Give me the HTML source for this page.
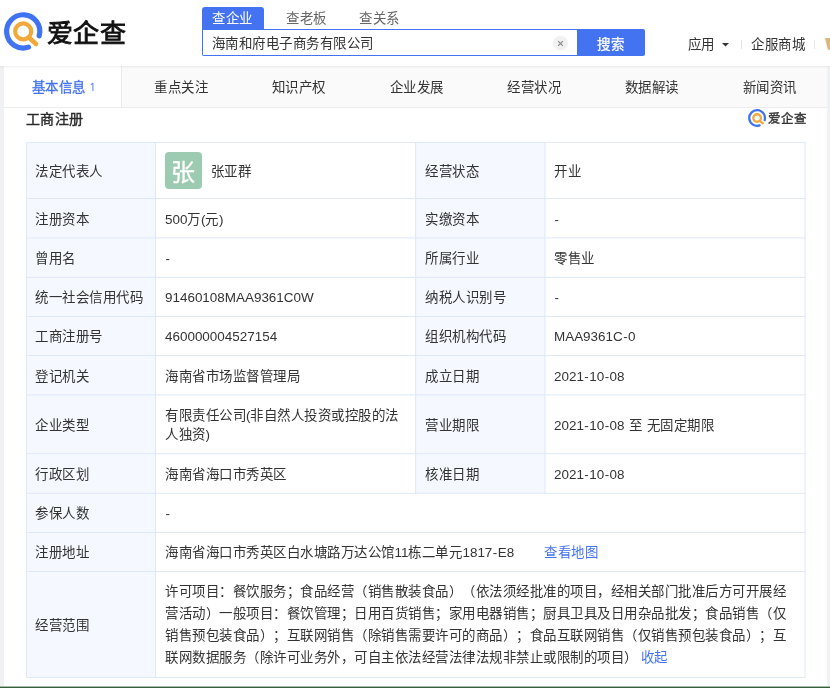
<!DOCTYPE html>
<html lang="zh-CN">
<head>
<meta charset="utf-8">
<style>
*{margin:0;padding:0;box-sizing:border-box;}
html,body{width:830px;height:688px;overflow:hidden;background:#f0f1f3;}
body{position:relative;font-family:"Liberation Sans",sans-serif;color:#333;font-size:13.4px;text-spacing-trim:space-all;}
.abs{position:absolute;white-space:nowrap;}
#header{position:absolute;left:0;top:0;width:830px;height:66px;background:#fff;box-shadow:0 1px 2px rgba(0,0,0,0.07);z-index:5;}
#main{position:absolute;left:4px;top:66px;width:823px;height:620px;background:#fff;}
#bottomline{position:absolute;left:0;top:686px;width:830px;height:2px;}
.tabbar{position:absolute;left:4px;top:66px;width:823px;height:42px;background:#fafafa;border-bottom:1px solid #ececec;}
.tab{position:absolute;top:0;height:41px;}
.tab.active{background:#fff;color:#4373f0;border-right:1px solid #ececec;}
.grid{position:absolute;left:26px;top:142px;width:779px;height:536px;border:1px solid #e3ebf7;}
.hl{position:absolute;height:1px;background:#e3ebf7;}
.vl{position:absolute;width:1px;background:#e3ebf7;}
.lab{position:absolute;background:#f5f8fe;}
.t{position:absolute;white-space:nowrap;font-size:13.45px;color:#333;line-height:19px;letter-spacing:0.5px;}
.l{letter-spacing:0;}
.hy{padding:0 0.45px;}
.sp{padding:0 0.25px;}
.h{position:absolute;white-space:nowrap;font-size:13.45px;line-height:19px;letter-spacing:0.5px;}
.tt{position:absolute;white-space:nowrap;font-size:13.45px;line-height:19px;letter-spacing:0.5px;top:77.5px;color:#333;}
</style>
</head>
<body><div id="wrap" style="position:absolute;left:0;top:0;width:830px;height:688px;will-change:transform;">
<div id="header">
  <svg class="abs" style="left:0;top:0" width="46" height="60" viewBox="0 0 46 60">
    <path d="M 39.2 35.8 A 16.6 16.6 0 1 0 28.5 47.1" fill="none" stroke="#3f73f1" stroke-width="5.2" stroke-linecap="round"/>
    <circle cx="23.2" cy="31.4" r="8" fill="none" stroke="#f0a93a" stroke-width="4.2"/>
    <path d="M 29 37.5 L 36 44" stroke="#f0a93a" stroke-width="4.6" stroke-linecap="round"/>
  </svg>
  <div class="abs" style="left:47px;top:15.5px;font-size:26px;line-height:36px;color:#111;letter-spacing:0.3px;-webkit-text-stroke:0.9px #111;transform:scaleY(0.955);transform-origin:0 0;">爱企查</div>

  <div class="abs" style="left:202px;top:7px;width:62px;height:23px;background:#4373f0;border-radius:3px 3px 0 0;"></div>
  <div class="h" style="left:212px;top:9.4px;color:#fff;">查企业</div>
  <div class="h" style="left:286px;top:9.4px;color:#666;">查老板</div>
  <div class="h" style="left:359.3px;top:9.4px;color:#666;">查关系</div>

  <div class="abs" style="left:202px;top:29px;width:377px;height:27px;border:1px solid #4373f0;border-right:none;border-radius:0 0 0 2px;background:#fff;"></div>
  <div class="h" style="left:211.5px;top:34px;color:#333;letter-spacing:0.5px;">海南和府电子商务有限公司</div>
  <div class="abs" style="left:553px;top:35.5px;width:14.5px;height:14.5px;border-radius:50%;background:#f1f1f1;"></div>
  <svg class="abs" style="left:553px;top:35.5px" width="15" height="15" viewBox="0 0 15 15"><path d="M5.1 5.1 L9.9 9.9 M9.9 5.1 L5.1 9.9" stroke="#8a8a8a" stroke-width="1.15"/></svg>
  <div class="abs" style="left:577px;top:29px;width:68px;height:27px;background:#4373f0;border-radius:0 2px 2px 0;"></div>
  <div class="h" style="left:597px;top:34.5px;color:#fff;-webkit-text-stroke:0.3px #fff;">搜索</div>

  <div class="h" style="left:687.8px;top:34.5px;color:#333;">应用</div>
  <svg class="abs" style="left:722px;top:42.5px" width="7" height="4" viewBox="0 0 7 4"><path d="M0 0 L7 0 L3.5 3.5 Z" fill="#333"/></svg>
  <div class="abs" style="left:741px;top:40px;width:1px;height:9px;background:#e4e4e4;"></div>
  <div class="h" style="left:751px;top:34.5px;color:#333;">企服商城</div>
  <div class="abs" style="left:814px;top:40px;width:1px;height:9px;background:#e8e8e8;"></div>
  <svg class="abs" style="left:824.8px;top:37.9px" width="6" height="12" viewBox="0 0 6 12"><path d="M0 0 L6 0 L6 11.7 L2.8 11.7 Z" fill="#dcb67c"/></svg>
</div>

<div id="main"></div>
<div class="tabbar">
  <div class="tab active" style="left:0;width:118px;"></div>
</div>
<div class="tt" style="left:31.7px;top:77.5px;color:#4373f0;-webkit-text-stroke:0.3px #4373f0;">基本信息</div>
<svg class="abs" style="left:85px;top:78px" width="15" height="17" viewBox="85 78 15 17"><path d="M90.9 84.8 L92.9 83.3 L92.9 91" stroke="#6d90f3" stroke-width="1.15" fill="none" stroke-linejoin="round"/></svg>
<div class="tt" style="left:154px;">重点关注</div>
<div class="tt" style="left:271.7px;">知识产权</div>
<div class="tt" style="left:389.5px;">企业发展</div>
<div class="tt" style="left:507.2px;">经营状况</div>
<div class="tt" style="left:624.9px;">数据解读</div>
<div class="tt" style="left:742.6px;">新闻资讯</div>

<div class="abs" style="left:25.5px;top:109px;font-size:14px;line-height:20px;letter-spacing:0.6px;-webkit-text-stroke:0.4px #2a2a2a;color:#2a2a2a;">工商注册</div>
<svg class="abs" style="left:747px;top:107.5px" width="20" height="20" viewBox="0 0 20 20">
  <path d="M 17.67 12.08 A 7.85 7.85 0 1 0 12.6 17.43" fill="none" stroke="#3f73f1" stroke-width="2.3" stroke-linecap="round"/>
  <circle cx="10.1" cy="10" r="3.75" fill="none" stroke="#f0a93a" stroke-width="2.3"/>
  <path d="M 12.9 12.8 L 15.8 15.4" stroke="#f0a93a" stroke-width="2.2" stroke-linecap="round"/>
</svg>
<div class="abs" style="left:768px;top:110px;font-size:12.5px;line-height:18px;letter-spacing:0.2px;-webkit-text-stroke:0.35px #333;color:#333;">爱企查</div>

<!--TABLE-->
<svg class="abs" style="left:0;top:0" width="830" height="688" viewBox="0 0 830 688">
<rect x="26.5" y="142.4" width="129.0" height="56.099999999999994" fill="#f5f8fe"/>
<rect x="415.6" y="142.4" width="129.39999999999998" height="56.099999999999994" fill="#f5f8fe"/>
<rect x="26.5" y="198.5" width="129.0" height="39.400000000000006" fill="#f5f8fe"/>
<rect x="415.6" y="198.5" width="129.39999999999998" height="39.400000000000006" fill="#f5f8fe"/>
<rect x="26.5" y="237.9" width="129.0" height="39.49999999999997" fill="#f5f8fe"/>
<rect x="415.6" y="237.9" width="129.39999999999998" height="39.49999999999997" fill="#f5f8fe"/>
<rect x="26.5" y="277.4" width="129.0" height="39.10000000000002" fill="#f5f8fe"/>
<rect x="415.6" y="277.4" width="129.39999999999998" height="39.10000000000002" fill="#f5f8fe"/>
<rect x="26.5" y="316.5" width="129.0" height="39.0" fill="#f5f8fe"/>
<rect x="415.6" y="316.5" width="129.39999999999998" height="39.0" fill="#f5f8fe"/>
<rect x="26.5" y="355.5" width="129.0" height="39.39999999999998" fill="#f5f8fe"/>
<rect x="415.6" y="355.5" width="129.39999999999998" height="39.39999999999998" fill="#f5f8fe"/>
<rect x="26.5" y="394.9" width="129.0" height="58.80000000000001" fill="#f5f8fe"/>
<rect x="415.6" y="394.9" width="129.39999999999998" height="58.80000000000001" fill="#f5f8fe"/>
<rect x="26.5" y="453.7" width="129.0" height="39.60000000000002" fill="#f5f8fe"/>
<rect x="415.6" y="453.7" width="129.39999999999998" height="39.60000000000002" fill="#f5f8fe"/>
<rect x="26.5" y="493.3" width="129.0" height="39.19999999999999" fill="#f5f8fe"/>
<rect x="26.5" y="532.5" width="129.0" height="39.0" fill="#f5f8fe"/>
<rect x="26.5" y="571.5" width="129.0" height="106.0" fill="#f5f8fe"/>
<line x1="26.0" y1="142.4" x2="805.5" y2="142.4" stroke="#dfe8f9" stroke-width="1"/>
<line x1="26.0" y1="198.5" x2="805.5" y2="198.5" stroke="#dfe8f9" stroke-width="1"/>
<line x1="26.0" y1="237.9" x2="805.5" y2="237.9" stroke="#dfe8f9" stroke-width="1"/>
<line x1="26.0" y1="277.4" x2="805.5" y2="277.4" stroke="#dfe8f9" stroke-width="1"/>
<line x1="26.0" y1="316.5" x2="805.5" y2="316.5" stroke="#dfe8f9" stroke-width="1"/>
<line x1="26.0" y1="355.5" x2="805.5" y2="355.5" stroke="#dfe8f9" stroke-width="1"/>
<line x1="26.0" y1="394.9" x2="805.5" y2="394.9" stroke="#dfe8f9" stroke-width="1"/>
<line x1="26.0" y1="453.7" x2="805.5" y2="453.7" stroke="#dfe8f9" stroke-width="1"/>
<line x1="26.0" y1="493.3" x2="805.5" y2="493.3" stroke="#dfe8f9" stroke-width="1"/>
<line x1="26.0" y1="532.5" x2="805.5" y2="532.5" stroke="#dfe8f9" stroke-width="1"/>
<line x1="26.0" y1="571.5" x2="805.5" y2="571.5" stroke="#dfe8f9" stroke-width="1"/>
<line x1="26.0" y1="677.5" x2="805.5" y2="677.5" stroke="#dfe8f9" stroke-width="1"/>
<line x1="26.5" y1="142.4" x2="26.5" y2="677.5" stroke="#dfe8f9" stroke-width="1"/>
<line x1="155.5" y1="142.4" x2="155.5" y2="677.5" stroke="#dfe8f9" stroke-width="1"/>
<line x1="415.6" y1="142.4" x2="415.6" y2="493.3" stroke="#dfe8f9" stroke-width="1"/>
<line x1="545.0" y1="142.4" x2="545.0" y2="493.3" stroke="#dfe8f9" stroke-width="1"/>
<line x1="805.0" y1="142.4" x2="805.0" y2="677.5" stroke="#dfe8f9" stroke-width="1"/>
</svg>
<div id="cells">
<div class="t" style="left:35.3px;top:161.75px;">法定代表人</div>
<div class="t" style="left:425px;top:161.75px;">经营状态</div>
<div class="t" style="left:554px;top:161.75px;">开业</div>
<div class="t" style="left:35.3px;top:209.5px;">注册资本</div>
<div class="t" style="left:165.0px;top:209.5px;"><span class="l">500</span>万<span class="l">(</span>元<span class="l">)</span></div>
<div class="t" style="left:425px;top:209.5px;">实缴资本</div>
<div class="t" style="left:554px;top:209.5px;"><span class="l"><span class="hy">-</span></span></div>
<div class="t" style="left:35.3px;top:248.95px;">曾用名</div>
<div class="t" style="left:165.0px;top:248.95px;"><span class="l"><span class="hy">-</span></span></div>
<div class="t" style="left:425px;top:248.95px;">所属行业</div>
<div class="t" style="left:554px;top:248.95px;">零售业</div>
<div class="t" style="left:35.3px;top:288.25px;">统一社会信用代码</div>
<div class="t" style="left:165.0px;top:288.25px;"><span class="l">91460108MAA9361C0W</span></div>
<div class="t" style="left:425px;top:288.25px;">纳税人识别号</div>
<div class="t" style="left:554px;top:288.25px;"><span class="l"><span class="hy">-</span></span></div>
<div class="t" style="left:35.3px;top:327.3px;">工商注册号</div>
<div class="t" style="left:165.0px;top:327.3px;"><span class="l">460000004527154</span></div>
<div class="t" style="left:425px;top:327.3px;">组织机构代码</div>
<div class="t" style="left:554px;top:327.3px;"><span class="l">MAA9361C<span class="hy">-</span>0</span></div>
<div class="t" style="left:35.3px;top:366.5px;">登记机关</div>
<div class="t" style="left:165.0px;top:366.5px;">海南省市场监督管理局</div>
<div class="t" style="left:425px;top:366.5px;">成立日期</div>
<div class="t" style="left:554px;top:366.5px;"><span class="l">2021<span class="hy">-</span>10<span class="hy">-</span>08</span></div>
<div class="t" style="left:35.3px;top:415.6px;">企业类型</div>
<div class="t" style="left:425px;top:415.6px;">营业期限</div>
<div class="t" style="left:554px;top:415.6px;"><span class="l">2021<span class="hy">-</span>10<span class="hy">-</span>08<span class="sp"> </span></span>至<span class="l"><span class="sp"> </span></span>无固定期限</div>
<div class="t" style="left:35.3px;top:464.8px;">行政区划</div>
<div class="t" style="left:165.0px;top:464.8px;">海南省海口市秀英区</div>
<div class="t" style="left:425px;top:464.8px;">核准日期</div>
<div class="t" style="left:554px;top:464.8px;"><span class="l">2021<span class="hy">-</span>10<span class="hy">-</span>08</span></div>
<div class="t" style="left:35.3px;top:504.2px;">参保人数</div>
<div class="t" style="left:165.0px;top:504.2px;"><span class="l"><span class="hy">-</span></span></div>
<div class="t" style="left:35.3px;top:543.3px;">注册地址</div>
<div class="t" style="left:35.3px;top:615.8px;">经营范围</div>
<div class="abs" style="left:165px;top:152px;width:37px;height:37px;border-radius:4px;background:#9ccbb1;color:#fff;font-size:24px;line-height:37px;text-align:center;-webkit-text-stroke:0.3px #fff;"><span style="position:relative;left:-1px;top:1.5px;">张</span></div>
<div class="t" style="left:210.8px;top:161.75px;">张亚群</div>
<div class="t" style="left:165.0px;top:405.6px;white-space:normal;line-height:19.5px;">有限责任公司<span class="l">(</span>非自然人投资或控股的法<br>人独资<span class="l">)</span></div>
<div class="t" style="left:165.0px;top:543.3px;">海南省海口市秀英区白水塘路万达公馆<span class="l">11</span>栋二单元<span class="l">1817<span class="hy">-</span>E8</span></div>
<div class="t" style="left:544px;top:543.3px;color:#4373f0;">查看地图</div>
<div class="t" style="left:165.0px;top:582.0px;line-height:19px;">许可项目：餐饮服务；食品经营（销售散装食品）（依法须经批准的项目，经相关部门批准后方可开展经</div>
<div class="t" style="left:165.0px;top:604.0px;line-height:19px;">营活动）一般项目：餐饮管理；日用百货销售；家用电器销售；厨具卫具及日用杂品批发；食品销售（仅</div>
<div class="t" style="left:165.0px;top:626.0px;line-height:19px;">销售预包装食品）；互联网销售（除销售需要许可的商品）；食品互联网销售（仅销售预包装食品）；互</div>
<div class="t" style="left:165.0px;top:648.0px;line-height:19px;">联网数据服务（除许可业务外，可自主依法经营法律法规非禁止或限制的项目）<span style="color:#4373f0;margin-left:3px;">收起</span></div>
</div>
<!--/TABLE-->
<svg id="bottomline" width="830" height="2" viewBox="0 0 830 2"><rect x="0" y="0" width="830" height="0.5" fill="#fff"/><rect x="0" y="0.6" width="830" height="1.4" fill="#32603a"/></svg>
</div></body>
</html>
